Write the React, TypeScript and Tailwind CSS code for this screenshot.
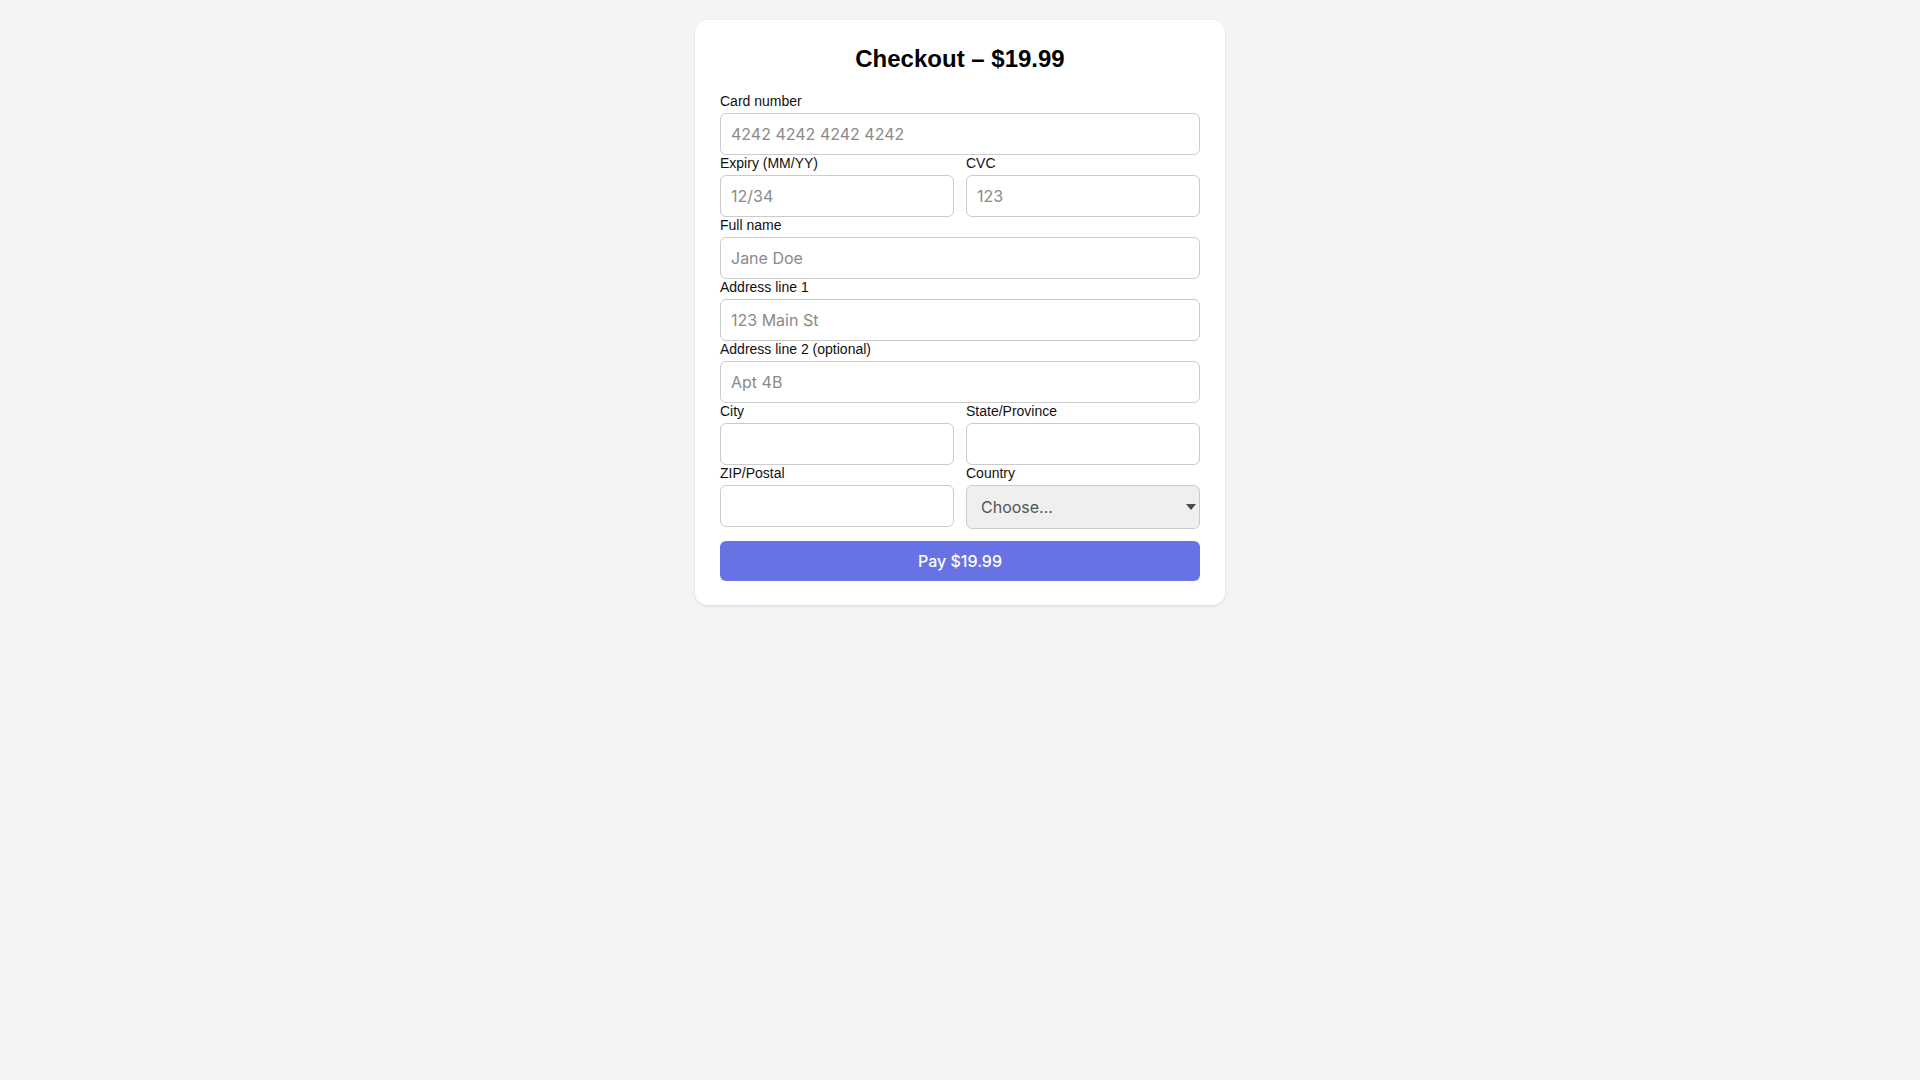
import type { ReactNode } from 'react'

const INPUT_CLASSES =
  'block h-[42px] w-full rounded-md border border-[#cccccc] bg-white px-2.5 text-base text-[#222] placeholder:text-[#8a8a8a] focus:outline-none'

function Field({ label, children }: { label: string; children: ReactNode }) {
  return (
    <div className="flex flex-col">
      <label className="mb-1 block h-4 text-sm leading-4 text-[#111]">{label}</label>
      {children}
    </div>
  )
}

function TextInput({ placeholder }: { placeholder?: string }) {
  return (
    <input
      type="text"
      placeholder={placeholder}
      className={INPUT_CLASSES}
      style={{ fontFamily: 'Inter, "Liberation Sans", sans-serif' }}
    />
  )
}

export default function App() {
  return (
    <div
      className="min-h-screen bg-[#f4f4f4] pt-5"
      style={{ fontFamily: '"Liberation Sans", Arial, sans-serif' }}
    >
      <form
        onSubmit={(e) => e.preventDefault()}
        className="mx-auto w-[530px] rounded-xl bg-white px-[25px] pt-[23px] pb-6 shadow-[0_1px_3px_rgba(0,0,0,0.12)]"
      >
        <h2 className="mb-[18px] text-center text-2xl leading-8 font-bold text-black">
          Checkout – $19.99
        </h2>

        <Field label="Card number">
          <TextInput placeholder="4242 4242 4242 4242" />
        </Field>

        <div className="grid grid-cols-2 gap-3">
          <Field label="Expiry (MM/YY)">
            <TextInput placeholder="12/34" />
          </Field>
          <Field label="CVC">
            <TextInput placeholder="123" />
          </Field>
        </div>

        <Field label="Full name">
          <TextInput placeholder="Jane Doe" />
        </Field>
        <Field label="Address line 1">
          <TextInput placeholder="123 Main St" />
        </Field>
        <Field label="Address line 2 (optional)">
          <TextInput placeholder="Apt 4B" />
        </Field>

        <div className="grid grid-cols-2 gap-3">
          <Field label="City">
            <TextInput />
          </Field>
          <Field label="State/Province">
            <TextInput />
          </Field>
        </div>

        <div className="grid grid-cols-2 gap-3">
          <Field label="ZIP/Postal">
            <TextInput />
          </Field>
          <Field label="Country">
            <div className="relative">
              <select
                defaultValue=""
                className="block h-11 w-full appearance-none rounded-md border border-[#cccccc] bg-[#efefef] pl-[14px] pr-6 text-base text-[#555] focus:outline-none"
                style={{ fontFamily: 'Inter, "Liberation Sans", sans-serif' }}
              >
                <option value="">Choose...</option>
                <option value="US">United States</option>
                <option value="CA">Canada</option>
                <option value="GB">United Kingdom</option>
              </select>
              <svg
                className="pointer-events-none absolute top-1/2 right-[4px] -translate-y-1/2"
                width="10"
                height="6"
                viewBox="0 0 10 6"
              >
                <path d="M0 0h10L5 6z" fill="#4a4a4a" />
              </svg>
            </div>
          </Field>
        </div>

        <button
          type="submit"
          className="mt-3 block h-10 w-full rounded-md bg-[#6772e5] text-base font-medium text-white"
          style={{ fontFamily: 'Inter, "Liberation Sans", sans-serif' }}
        >
          Pay $19.99
        </button>
      </form>
    </div>
  )
}
